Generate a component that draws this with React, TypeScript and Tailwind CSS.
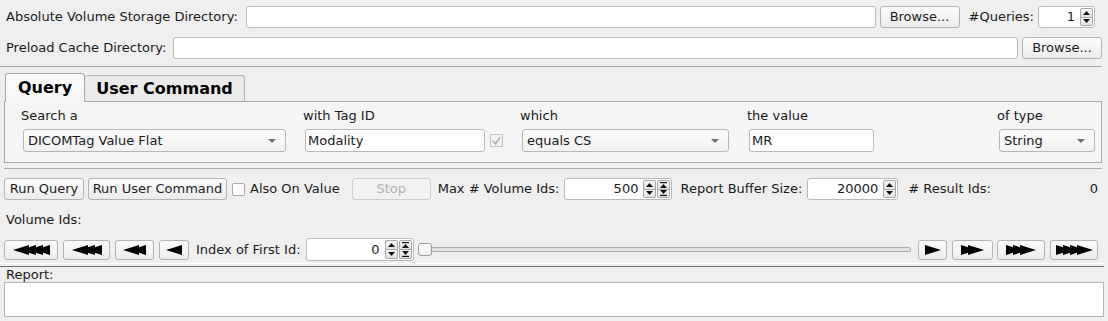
import React from "react";

const btn =
  "h-[22px] flex items-center justify-center rounded-[3px] border border-[#b3b3b3] bg-linear-to-b from-[#fbfbfb] to-[#ececec] text-[#1c1c1c]";
const field = "h-[22px] rounded-[3px] border border-[#b9b9b9] bg-white";

function Tri({ up, bar }: { up?: boolean; bar?: boolean }) {
  return (
    <svg width="7" height={bar ? 6 : 4} viewBox={bar ? "0 0 7 6" : "0 0 7 4"}>
      {up ? (
        <>
          {bar && <rect x="0" y="0" width="7" height="1.2" fill="#111" />}
          <polygon points={bar ? "3.5,2 7,6 0,6" : "3.5,0 7,4 0,4"} fill="#111" />
        </>
      ) : (
        <>
          <polygon points="0,0 7,0 3.5,4" fill="#111" />
          {bar && <rect x="0" y="4.8" width="7" height="1.2" fill="#111" />}
        </>
      )}
    </svg>
  );
}

function SpinCol({ bar }: { bar?: boolean }) {
  const half =
    "flex-1 flex items-center justify-center border border-[#a6a6a6] bg-linear-to-b from-[#f8f8f8] to-[#e3e3e3]";
  return (
    <div className="w-[13px] flex flex-col py-[1px] mr-[1px]">
      <div className={half + " rounded-t-[2px]"}>
        <Tri up bar={bar} />
      </div>
      <div className={half + " -mt-px rounded-b-[2px]"}>
        <Tri bar={bar} />
      </div>
    </div>
  );
}

function SpinBox({
  value,
  width,
  double,
  className = "",
}: {
  value: string;
  width: string;
  double?: boolean;
  className?: string;
}) {
  return (
    <div className={`${field} ${width} ${className} flex items-stretch`}>
      <div className="flex-1 flex items-center justify-end pr-[5px]">{value}</div>
      <SpinCol />
      {double && <SpinCol bar />}
    </div>
  );
}

function Combo({ text, width }: { text: string; width: string }) {
  return (
    <div
      className={`${width} ml-[2px] h-[23px] rounded-[3px] border border-[#b7b7b7] bg-linear-to-b from-[#fcfcfc] to-[#f1f1f1] flex items-center pl-[4px] pr-[9px]`}
    >
      <span className="flex-1">{text}</span>
      <svg width="8" height="4" viewBox="0 0 8 4">
        <polygon points="0,0 8,0 4,4" fill="#6e6e6e" />
      </svg>
    </div>
  );
}

function Arrows({ n, left }: { n: number; left?: boolean }) {
  const step = 7;
  const w = 16 + (n - 1) * step;
  const tris = Array.from({ length: n }, (_, i) => {
    const x = i * step;
    return left
      ? `${x},5 ${x + 16},0 ${x + 16},10`
      : `${w - x},5 ${w - x - 16},0 ${w - x - 16},10`;
  });
  return (
    <svg width={w} height="10" viewBox={`0 0 ${w} 10`}>
      {tris.map((p, i) => (
        <polygon key={i} points={p} fill="#000" />
      ))}
    </svg>
  );
}

export default function App() {
  return (
    <div className="w-[1108px] h-[321px] overflow-hidden bg-[#efefef] text-[13px] leading-[16px] text-[#1a1a1a] font-['DejaVu_Sans',sans-serif] flex flex-col">
      {/* directories */}
      <div className="mt-[6px] h-[22px] flex items-center pl-[6px] pr-[6px]">
        <span>Absolute Volume Storage Directory:</span>
        <div className={`${field} ml-[8px] flex-1`} />
        <div className={`${btn} ml-[4px] w-[80px]`}>Browse...</div>
        <span className="ml-[9px]">#Queries:</span>
        <SpinBox value="1" width="w-[57px]" className="ml-[4px] mr-[7px]" />
      </div>
      <div className="mt-[9px] h-[22px] flex items-center pl-[6px] pr-[6px]">
        <span>Preload Cache Directory:</span>
        <div className={`${field} ml-[6px] flex-1`} />
        <div className={`${btn} ml-[4px] w-[80px]`}>Browse...</div>
      </div>
      <div className="mt-[7px] h-px bg-[#a9a9a9] mr-[6px]" />

      {/* tabs */}
      <div className="mt-[6px] h-[28px] flex items-end pl-[5px]">
        <div className="relative z-10 -mb-px h-[29px] w-[80px] flex items-center justify-center rounded-t-[3px] border border-b-0 border-[#a9a9a9] bg-linear-to-b from-[#fdfdfd] to-[#f5f5f5] text-[16px] font-bold text-black">
          Query
        </div>
        <div className="h-[26px] w-[160px] flex items-center justify-center rounded-t-[3px] border border-l-0 border-b-0 border-[#b3b3b3] bg-[#ebebeb] text-[16px] font-bold text-black">
          User Command
        </div>
      </div>
      <div className="ml-[4px] mr-[6px] border border-[#a9a9a9] bg-[#f5f5f5] pt-[6px] pb-[10px] pl-[16px] pr-[6px] flex">
        <div className="w-[265px] flex flex-col">
          <span className="h-[16px]">Search a</span>
          <div className="mt-[5px]">
            <Combo text="DICOMTag Value Flat" width="w-[263px]" />
          </div>
        </div>
        <div className="ml-[17px] w-[200px] flex flex-col">
          <span className="h-[16px]">with Tag ID</span>
          <div className="mt-[5px] h-[23px] flex items-center">
            <div className="ml-[2px] w-[180px] h-[23px] rounded-[3px] border border-[#b9b9b9] bg-white flex items-center pl-[2px]">
              Modality
            </div>
            <div className="ml-[5px] w-[13px] h-[13px] border border-[#c4c4c4] bg-[#f2f2f2] flex items-center justify-center">
              <svg width="9" height="8" viewBox="0 0 9 8">
                <polyline points="1,4 3.5,7 8,0.5" fill="none" stroke="#a3a3a3" strokeWidth="1.3" />
              </svg>
            </div>
          </div>
        </div>
        <div className="ml-[17px] w-[209px] flex flex-col">
          <span className="h-[16px]">which</span>
          <div className="mt-[5px]">
            <Combo text="equals CS" width="w-[207px]" />
          </div>
        </div>
        <div className="ml-[18px] w-[127px] flex flex-col">
          <span className="h-[16px]">the value</span>
          <div className="mt-[5px] ml-[2px] w-[125px] h-[23px] rounded-[3px] border border-[#b9b9b9] bg-white flex items-center pl-[2px]">
            MR
          </div>
        </div>
        <div className="ml-auto w-[98px] flex flex-col">
          <span className="h-[16px]">of type</span>
          <div className="mt-[5px]">
            <Combo text="String" width="w-[96px]" />
          </div>
        </div>
      </div>
      <div className="mt-[5px] h-px bg-[#a9a9a9] ml-[4px] mr-[6px]" />

      {/* run row */}
      <div className="mt-[9px] h-[22px] flex items-center pl-[4px]">
        <div className={`${btn} w-[80px]`}>Run Query</div>
        <div className={`${btn} ml-[4px] w-[139px]`}>Run User Command</div>
        <div className="ml-[5px] w-[13px] h-[13px] rounded-[2px] border border-[#a9a9a9] bg-white" />
        <span className="ml-[5px]">Also On Value</span>
        <div className="ml-[12px] w-[79px] h-[22px] flex items-center justify-center rounded-[3px] border border-[#cdcdcd] bg-[#f1f1f1] text-[#b1b1b1]">
          Stop
        </div>
        <span className="ml-[7px]">Max # Volume Ids:</span>
        <SpinBox value="500" width="w-[108px]" double className="ml-[5px]" />
        <span className="ml-[8px]">Report Buffer Size:</span>
        <SpinBox value="20000" width="w-[91px]" className="ml-[5px]" />
        <span className="ml-[10px]">{"# Result Ids:"}</span>
        <span className="ml-auto mr-[10px]">0</span>
      </div>

      <div className="mt-[12px] h-[16px] pl-[6px]">Volume Ids:</div>

      {/* navigation row */}
      <div className="mt-[10px] h-[23px] flex items-center pl-[4px]">
        <div className={`${btn} !h-[20px] w-[54px]`}>
          <Arrows n={4} left />
        </div>
        <div className={`${btn} !h-[20px] ml-[5px] w-[47px]`}>
          <Arrows n={3} left />
        </div>
        <div className={`${btn} !h-[20px] ml-[5px] w-[39px]`}>
          <Arrows n={2} left />
        </div>
        <div className={`${btn} !h-[20px] ml-[5px] w-[30px]`}>
          <Arrows n={1} left />
        </div>
        <span className="ml-[7px]">Index of First Id:</span>
        <SpinBox value="0" width="w-[108px]" double className="ml-[5px] !h-[23px]" />
        <div className="ml-[4px] flex-1 flex items-center">
          <div className="w-[14px] h-[13px] rounded-[3px] border border-[#9c9c9c] bg-linear-to-b from-white to-[#f1f1f1] relative z-10" />
          <div className="-ml-px flex-1 h-[5px] rounded-[2px] border border-[#ababab] bg-[#e3e3e3]" />
        </div>
        <div className={`${btn} !h-[20px] ml-[7px] w-[29px]`}>
          <Arrows n={1} />
        </div>
        <div className={`${btn} !h-[20px] ml-[5px] w-[41px]`}>
          <Arrows n={2} />
        </div>
        <div className={`${btn} !h-[20px] ml-[4px] w-[48px]`}>
          <Arrows n={3} />
        </div>
        <div className={`${btn} !h-[20px] ml-[5px] w-[48px] mr-[10px]`}>
          <Arrows n={4} />
        </div>
      </div>
      <div className="mt-[2px] h-px bg-white w-[1104px]" />
      <div className="mt-[2px] h-px bg-[#6f6f6f] w-[1104px]" />

      {/* report */}
      <div className="h-[15px] leading-[15px] pl-[6px]">Report:</div>
      <div className="ml-[4px] w-[1100px] h-[35px] border border-[#b4b4b4] bg-white" />
    </div>
  );
}
